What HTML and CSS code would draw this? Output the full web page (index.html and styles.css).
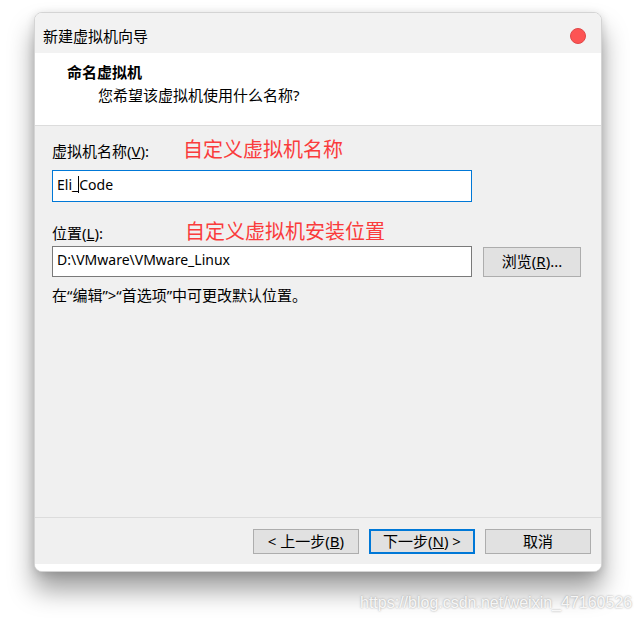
FILE: index.html
```html
<!DOCTYPE html>
<html lang="zh-CN">
<head>
  <meta charset="UTF-8">
  <title>新建虚拟机向导</title>
  <link rel="stylesheet" href="styles.css">
</head>
<body>
  <div class="window">
    <div class="titlebar">
      <span class="title">新建虚拟机向导</span>
      <span class="close"></span>
    </div>

    <div class="header">
      <div class="header-title">命名虚拟机</div>
      <div class="header-sub">您希望该虚拟机使用什么名称?</div>
    </div>

    <div class="content">
      <div class="label-row">
        <span class="label">虚拟机名称(<u>V</u>):</span>
        <span class="note note-name">自定义虚拟机名称</span>
      </div>
      <div class="textbox focused">Eli_<span class="caret"></span>Code</div>

      <div class="label-row second">
        <span class="label">位置(<u>L</u>):</span>
        <span class="note note-path">自定义虚拟机安装位置</span>
      </div>
      <div class="path-row">
        <div class="textbox">D:\VMware\VMware_Linux</div>
        <button class="btn browse">浏览(<u>R</u>)...</button>
      </div>
      <div class="hint">在“编辑”&gt;“首选项”中可更改默认位置。</div>
    </div>

    <div class="footer">
      <button class="btn">&lt; 上一步(<u>B</u>)</button>
      <button class="btn primary">下一步(<u>N</u>) &gt;</button>
      <button class="btn">取消</button>
    </div>
  </div>

  <div class="watermark">https://blog.csdn.net/weixin_47160526</div>
</body>
</html>
```

FILE: styles.css
```css
* {
  box-sizing: border-box;
}

body {
  margin: 0;
  background: #ffffff;
  font-family: "Noto Sans", "Noto Sans CJK SC", sans-serif;
  font-size: 15px;
  color: #000;
  width: 642px;
  height: 622px;
  overflow: hidden;
  position: relative;
}

.window {
  margin: 12px 0 0 34px;
  width: 568px;
  height: 560px;
  border: 1px solid #d4d4d4;
  border-radius: 8px;
  background: #ffffff;
  box-shadow: 0 18px 26px rgba(0, 0, 0, 0.38), 0 2px 10px rgba(0, 0, 0, 0.14);
  display: flex;
  flex-direction: column;
  overflow: hidden;
}

.titlebar {
  height: 40px;
  background: #f2f2f2;
  display: flex;
  align-items: center;
  justify-content: space-between;
  padding: 0 15px 0 8px;
}

.title {
  font-size: 15px;
  line-height: 20px;
  padding-top: 5px;
}

.close {
  width: 16px;
  height: 16px;
  border-radius: 50%;
  background: #fd5454;
  border: 1px solid #e04848;
  margin-top: 5px;
}

.header {
  height: 73px;
  background: #ffffff;
  border-bottom: 1px solid #dcdcdc;
  padding: 9px 0 0 32px;
}

.header-title {
  font-weight: bold;
  font-size: 15px;
  line-height: 20px;
}

.header-sub {
  margin: 3px 0 0 31px;
  line-height: 20px;
}

.content {
  flex: 1;
  background: #f0f0f0;
  padding: 10px 0 0 17px;
}

.label-row {
  display: flex;
  align-items: baseline;
  height: 28px;
}

.label-row.second {
  margin-top: 16px;
}

.label {
  line-height: 20px;
}

.note {
  color: #fa3c3c;
  font-size: 20px;
  line-height: 28px;
}

.note-name {
  margin-left: 34px;
}

.note-path {
  margin-left: 82px;
}

.textbox {
  width: 420px;
  height: 32px;
  margin-top: 6px;
  background: #ffffff;
  border: 1px solid #7a7a7a;
  padding: 0 4px 3px;
  line-height: 26px;
  font-size: 14px;
  display: flex;
  align-items: center;
}

.textbox.focused {
  border-color: #0078d7;
}

.caret {
  display: inline-block;
  width: 1px;
  height: 17px;
  background: #000;
}

.path-row {
  display: flex;
  align-items: center;
  gap: 11px;
}

.path-row .textbox {
  margin-top: 0;
  height: 31px;
}

.hint {
  margin-top: 8px;
  line-height: 20px;
}

.btn {
  font-family: "Noto Sans", "Noto Sans CJK SC", sans-serif;
  font-size: 15px;
  color: #000;
  width: 106px;
  height: 25px;
  padding: 0;
  background: #e1e1e1;
  border: 1px solid #adadad;
  line-height: 21px;
}

.btn.browse {
  width: 98px;
  height: 30px;
}

.btn.primary {
  border: 2px solid #0078d7;
}

.footer {
  height: 54px;
  background: #f0f0f0;
  border-top: 1px solid #dcdcdc;
  border-bottom: 7px solid #ffffff;
  display: flex;
  justify-content: flex-end;
  gap: 10px;
  padding: 11px 10px 0 0;
}

.watermark {
  position: absolute;
  left: 360px;
  top: 594px;
  font-family: "Liberation Sans", sans-serif;
  font-size: 16px;
  color: rgba(255, 255, 255, 0.9);
  text-shadow: 0 0 2px rgba(110, 110, 110, 0.7);
}
```
